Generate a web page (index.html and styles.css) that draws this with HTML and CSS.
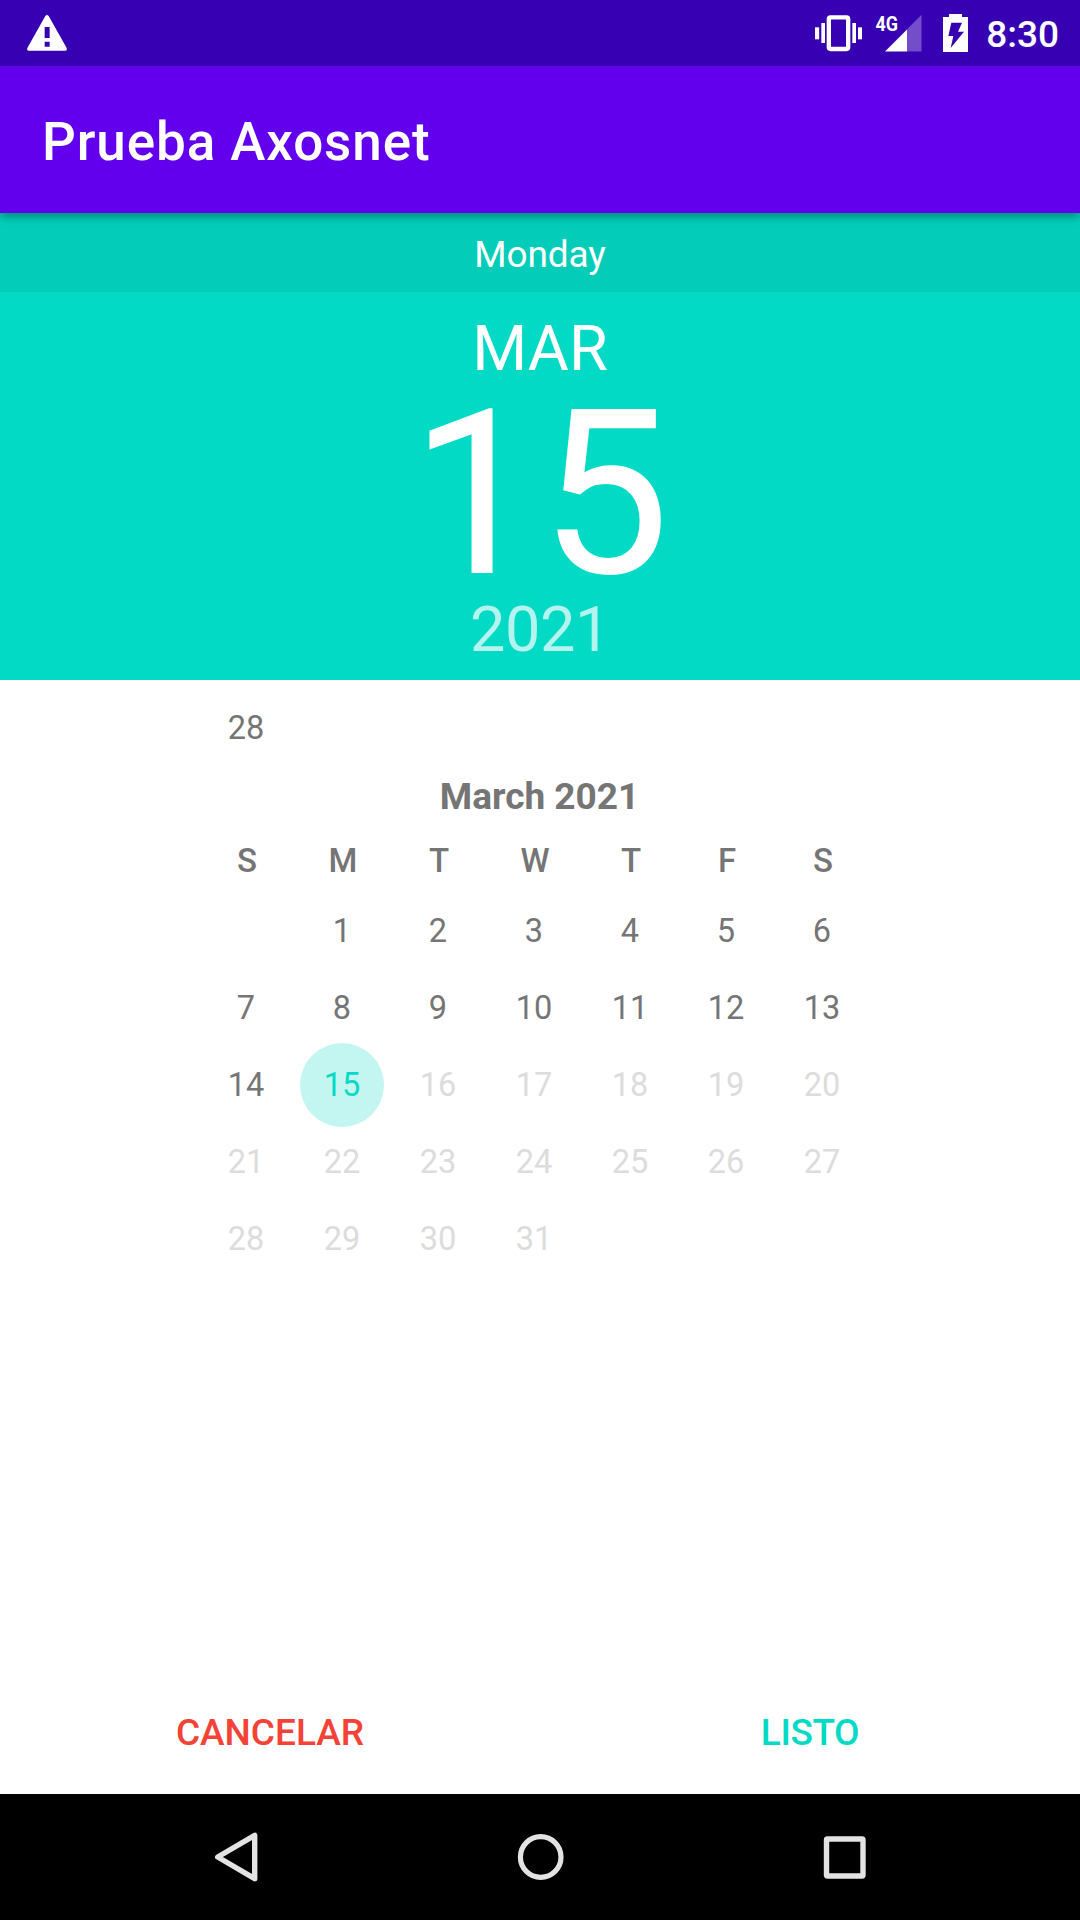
FILE: index.html
```html
<!DOCTYPE html>
<html lang="es">
<head>
<meta charset="utf-8">
<title>Prueba Axosnet</title>
<link rel="stylesheet" href="styles.css">
</head>
<body>
<div class="screen">
  <div class="status-bar">
    <svg class="icon-warning" width="40" height="36" viewBox="0 0 120 108"><path fill="#fff" fill-rule="evenodd" d="M55 3Q60-3 65 3L119 99Q121 107 115 107H5Q-1 107 1 99ZM53 36V69H68V36ZM53 80V95H68V80Z"/></svg>
    <div class="status-icons">
      <svg class="icon-vibrate" width="47" height="36" viewBox="0 0 141 108"><g fill="#fff"><rect x="0" y="37" width="12.500" height="36"/><rect x="19" y="24" width="11" height="60"/><rect x="112" y="24" width="11" height="60"/><rect x="129" y="37" width="12" height="36"/></g><rect x="41.500" y="7" width="58" height="95" rx="5" fill="none" stroke="#fff" stroke-width="13"/></svg>
      <svg class="icon-signal" width="46" height="38" viewBox="0 0 46 38"><path fill="#fff" fill-opacity=".3" d="M31 15.300L45.500 .8V37.500H31Z"/><path fill="#fff" d="M9 37.500L31 15.500V37.500Z"/><text x="-.5" y="17" class="network" textLength="22.500" lengthAdjust="spacingAndGlyphs">4G</text></svg>
      <svg class="icon-battery" width="25" height="38" viewBox="0 0 75 114"><path fill="#fff" fill-rule="evenodd" d="M18 0H57V9H75V114H0V9H18ZM25 26L16 66H31L23 102L63 53H45L57 26Z"/></svg>
      <span class="clock">8:30</span>
    </div>
  </div>
  <header class="app-bar"><h1>Prueba Axosnet</h1></header>
  <div class="weekday-strip">Monday</div>
  <div class="date-header">
    <div class="month">MAR</div>
    <div class="day">15</div>
    <div class="year">2021</div>
  </div>
  <main class="calendar">
    <div class="week previous"><span>28</span></div>
    <h2 class="month-title">March 2021</h2>
    <div class="week weekdays"><span>S</span><span>M</span><span>T</span><span>W</span><span>T</span><span>F</span><span>S</span></div>
    <div class="week"><span></span><span>1</span><span>2</span><span>3</span><span>4</span><span>5</span><span>6</span></div>
    <div class="week"><span>7</span><span>8</span><span>9</span><span>10</span><span>11</span><span>12</span><span>13</span></div>
    <div class="week"><span>14</span><span class="selected">15</span><span class="off">16</span><span class="off">17</span><span class="off">18</span><span class="off">19</span><span class="off">20</span></div>
    <div class="week disabled"><span>21</span><span>22</span><span>23</span><span>24</span><span>25</span><span>26</span><span>27</span></div>
    <div class="week disabled"><span>28</span><span>29</span><span>30</span><span>31</span></div>
  </main>
  <div class="actions">
    <button class="cancel">CANCELAR</button>
    <button class="accept">LISTO</button>
  </div>
  <nav class="nav-bar">
    <svg width="50" height="50" viewBox="0 0 50 50"><path d="M43.700 3.300V46.700L6.700 25Z" fill="none" stroke="#e3e3e3" stroke-width="5.400" stroke-linejoin="round"/></svg>
    <svg width="50" height="50" viewBox="0 0 50 50"><circle cx="24.700" cy="25" r="20.300" fill="none" stroke="#e3e3e3" stroke-width="5.200"/></svg>
    <svg width="50" height="50" viewBox="0 0 50 50"><rect x="6.500" y="7" width="36.500" height="37" rx="1" fill="none" stroke="#e3e3e3" stroke-width="5.400"/></svg>
  </nav>
</div>
</body>
</html>
```
FILE: styles.css
```css
* { box-sizing: border-box; }
body { margin: 0; background: #fff; font-family: Roboto, sans-serif; }
svg { display: block; flex: none; overflow: visible; }
.screen { width: 1080px; height: 1920px; display: flex; flex-direction: column; overflow: hidden; }

.status-bar { position: relative; z-index: 2; height: 66px; flex: none; background: #3700b3; color: #fff; display: flex; justify-content: space-between; align-items: flex-start; padding: 14px 21px 0 27px; }
.icon-warning { margin-top: 1px; }
.status-icons { display: flex; align-items: flex-start; }
.icon-vibrate { margin: 1px 14px 0 0; }
.icon-signal { margin-right: 21px; }
.icon-battery { margin-right: 18px; }
.network { font: 700 21px Roboto, sans-serif; fill: #fff; }
.clock { font-size: 37px; font-weight: 500; line-height: 42px; }

.app-bar { height: 147px; flex: none; background: #6200ee; color: #fff; padding: 44px 42px 0; position: relative; z-index: 1; box-shadow: 0 3px 9px rgba(0, 0, 0, .38); }
.app-bar h1 { margin: 0; font-size: 53px; font-weight: 500; line-height: 64px; letter-spacing: .9px; }

.weekday-strip { height: 79px; flex: none; background: #03cdb9; color: #fff; font-size: 37px; line-height: 83px; letter-spacing: -.1px; text-align: center; }
.date-header { height: 388px; flex: none; background: #03dac5; color: #fff; text-align: center; padding-top: 19px; }
.month { font-size: 63px; line-height: 75px; }
.day { font-size: 231px; line-height: 216px; }
.year { font-size: 63px; line-height: 55px; letter-spacing: -.4px; color: rgba(255, 255, 255, .7); }

.calendar { flex: 1; padding: 9px 210px 0 198px; color: #757575; }
.week { display: grid; grid-template-columns: repeat(7, 96px); height: 77px; font-size: 32.500px; line-height: 79px; text-align: center; }
.month-title { margin: 0 -12px 0 0; padding-right: 1px; height: 62px; font-size: 37px; font-weight: 700; line-height: 62px; text-align: center; }
.weekdays { height: 64px; line-height: 66px; font-size: 33px; font-weight: 500; padding-left: 1px; }
.selected { position: relative; z-index: 0; color: #03dac5; }
.selected::before { content: ""; position: absolute; z-index: -1; left: 6px; top: -3px; width: 84px; height: 84px; border-radius: 50%; background: #c4f6f1; }
.off, .disabled { color: #dcdcdc; }

.actions { height: 126px; flex: none; display: grid; grid-template-columns: 1fr 1fr; }
.actions button { border: 0; padding: 3px 0 0; background: none; font: 500 37px/123px Roboto, sans-serif; }
.cancel { color: #f44336; }
.actions .accept { color: #03dac5; letter-spacing: -.4px; }

.nav-bar { height: 126px; flex: none; background: #000; display: flex; justify-content: space-between; align-items: center; padding: 0 210px 0 211px; }
```
